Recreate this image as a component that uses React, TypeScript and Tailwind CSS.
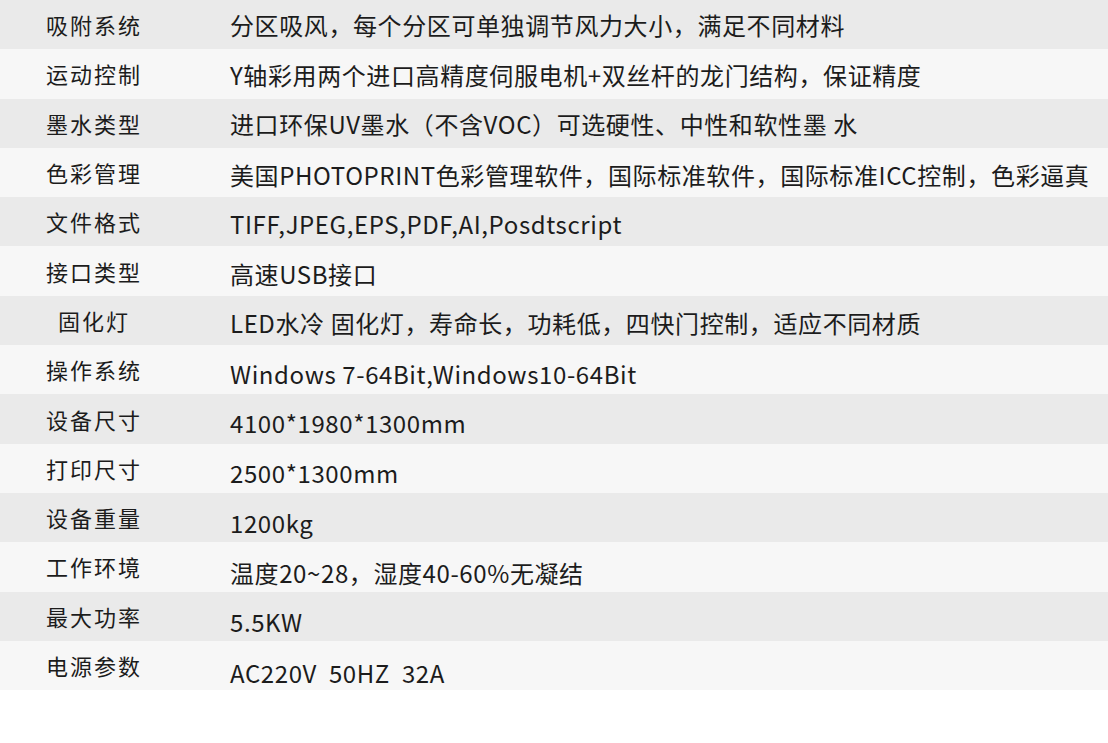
const rows: [string, string][] = [
  ["吸附系统", "分区吸风，每个分区可单独调节风力大小，满足不同材料"],
  ["运动控制", "Y轴彩用两个进口高精度伺服电机+双丝杆的龙门结构，保证精度"],
  ["墨水类型", "进口环保UV墨水（不含VOC）可选硬性、中性和软性墨 水"],
  ["色彩管理", "美国PHOTOPRINT色彩管理软件，国际标准软件，国际标准ICC控制，色彩逼真"],
  ["文件格式", "TIFF,JPEG,EPS,PDF,AI,Posdtscript"],
  ["接口类型", "高速USB接口"],
  ["固化灯", "LED水冷 固化灯，寿命长，功耗低，四快门控制，适应不同材质"],
  ["操作系统", "Windows 7-64Bit,Windows10-64Bit"],
  ["设备尺寸", "4100*1980*1300mm"],
  ["打印尺寸", "2500*1300mm"],
  ["设备重量", "1200kg"],
  ["工作环境", "温度20~28，湿度40-60%无凝结"],
  ["最大功率", "5.5KW"],
  ["电源参数", "AC220V  50HZ  32A"],
];

export default function App() {
  return (
    <div className="w-[1108px] h-[743px] bg-white text-[#1c1c1c] font-['Noto_Sans_CJK_SC',sans-serif]">
      <div className="flex flex-col">
        {rows.map(([label, value], i) => (
          <div
            key={label}
            className={`flex items-center h-[49.3px] ${i % 2 === 0 ? "bg-[#eaeaea]" : "bg-[#f7f7f7]"}`}
          >
            <div className="w-[188px] text-center text-[22px] tracking-[2px]">{label}</div>
            {/* values sit a little lower the further down the table */}
            <div
              className="pl-[42px] text-[24px] tracking-[0.6px] whitespace-pre"
              style={{ transform: `translateY(${(i * 0.5).toFixed(1)}px)` }}
            >
              {value}
            </div>
          </div>
        ))}
      </div>
    </div>
  );
}
